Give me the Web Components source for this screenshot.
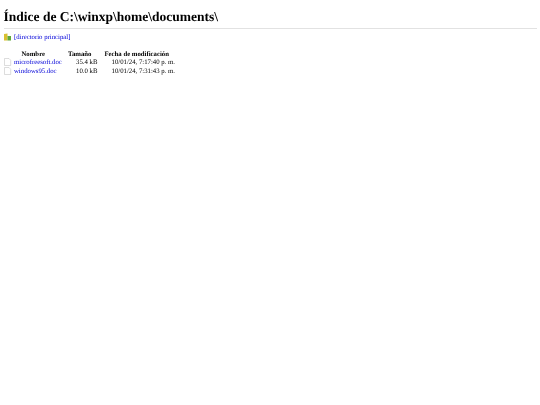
<!DOCTYPE html>
<html lang="es"><head><meta charset="utf-8"><title>Índice</title>
<style>html,body{margin:0;background:#fff}body{font-family:"Liberation Serif",serif;color:#000;text-rendering:geometricPrecision}</style>
</head><body>
<dir-listing>
  <dir-row slot="rows" name="microfreesoft.doc" size="35.4 kB" date="10/01/24, 7:17:40 p. m."></dir-row>
  <dir-row slot="rows" name="windows95.doc" size="10.0 kB" date="10/01/24, 7:31:43 p. m."></dir-row>
</dir-listing>
<script>
class DirListing extends HTMLElement{
  constructor(){super();this.attachShadow({mode:'open'}).innerHTML=`<style>
  :host{display:block;padding:9px 3.5px 0 3.5px;font-size:6.75px;line-height:8px;filter:blur(.2px)}
  h1{margin:0;font-size:13.5px;line-height:16px;font-weight:bold;padding-bottom:3px;border-bottom:1px solid #e2e2e2}
  .up{display:flex;align-items:flex-start;gap:2.5px;margin-top:4px;height:8px}
  a{display:block;color:#0000d8;text-decoration:none;line-height:10px}
  .head{display:grid;grid-template-columns:59.5px 35.5px auto;margin-top:9px;font-weight:bold;height:8px;line-height:10px}
  .head span:first-child{text-align:center}
  .head span:nth-child(2){padding-left:5px}
  .head span:nth-child(3){padding-left:6px}
  svg{display:block;flex:none}
  </style>
  <h1>Índice de C:\\winxp\\home\\documents\\</h1>
  <div class="up"><svg width="8" height="8" viewBox="0 0 8 8"><path d="M0 1L3.5 .5V7.5H0Z" fill="#d8c030"/><rect x="3.5" y="3" width="3.5" height="4.5" fill="#5fa83a"/></svg><a href="#">[directorio principal]</a></div>
  <div class="head"><span>Nombre</span><span>Tamaño</span><span>Fecha de modificación</span></div>
  <slot name="rows"></slot>`;}
}
class DirRow extends HTMLElement{
  constructor(){super();this.attachShadow({mode:'open'}).innerHTML=`<style>
  :host{display:grid;grid-template-columns:60px 35px auto;height:8.5px;line-height:10.5px;font-size:6.75px;white-space:nowrap}
  .n{display:flex;align-items:flex-start;gap:2.5px}
  a{color:#0000d8;text-decoration:none}
  .s{text-align:right;margin-right:1px}.d{padding-left:13px}
  svg{display:block;flex:none}
  </style>
  <span class="n"><svg width="8" height="8" viewBox="0 0 8 8"><path d="M.5 .5H5L6.7 2.2V7.5H.5Z" fill="#fff" stroke="#bbb" stroke-width=".5"/></svg><a href="#"></a></span><span class="s"></span><span class="d"></span>`;}
  connectedCallback(){const r=this.shadowRoot;r.querySelector('a').textContent=this.getAttribute('name');r.querySelector('.s').textContent=this.getAttribute('size');r.querySelector('.d').textContent=this.getAttribute('date');}
}
customElements.define('dir-listing',DirListing);customElements.define('dir-row',DirRow);
</script></body></html>
